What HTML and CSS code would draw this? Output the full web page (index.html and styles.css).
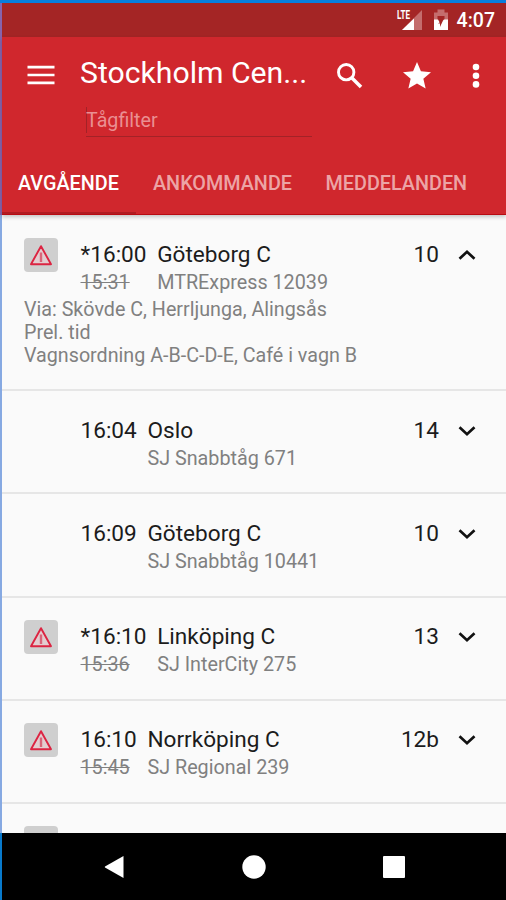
FILE: index.html
```html
<!DOCTYPE html>
<html lang="sv">
<head>
<meta charset="utf-8">
<title>Stockholm Central</title>
<link rel="stylesheet" href="styles.css">
</head>
<body>
<svg class="defs" width="0" height="0">
  <symbol id="warn" viewBox="0 0 34 34"><path d="M17 8.200 L27 26.200 H7 Z" fill="#e3cdd0" stroke="#dc2442" stroke-width="1.9" stroke-linejoin="round"/><path d="M17 14.500V24" stroke="#d9667a" stroke-width="2.400"/></symbol>
  <symbol id="down" viewBox="0 0 18 12"><path d="M1.500 2.300 L9 9.200 L16.500 2.300" fill="none" stroke="#111" stroke-width="2.700"/></symbol>
  <symbol id="up" viewBox="0 0 18 12"><path d="M1.500 9.700 L9 2.800 L16.500 9.700" fill="none" stroke="#111" stroke-width="2.700"/></symbol>
</svg>
<div class="screen">
  <div class="edge"><i class="edge-red"></i><i class="edge-light"></i><i class="edge-dark"></i></div>
  <div class="phone">
    <div class="status">
      <svg class="signal" width="28" height="24" viewBox="0 0 28 24"><path d="M26 2V22H6Z" fill="#c46d6d"/><path d="M18 10.500V22H6Z" fill="#fff"/><text class="lte" x="1" y="11" textLength="13" lengthAdjust="spacingAndGlyphs">LTE</text></svg>
      <svg class="battery" width="16" height="24" viewBox="0 0 16 24"><path d="M1 12V4.500H4.500V1.500H11.500V4.500H15V12H11.500V8H4.500V12Z" fill="#c46d6d"/><path d="M1 11.500H5L7 15L11 11.500H15V22H1Z" fill="#fff"/><path d="M10.500 11.500L7 19V15.500H5Z" fill="#a42525"/></svg>
      <span class="clock">4:07</span>
    </div>
    <header class="header">
      <div class="toolbar">
        <svg class="menu" width="28" height="22" viewBox="0 0 28 22"><path d="M.5 3.200H27.500M.5 11H27.500M.5 18.900H27.500" stroke="#fff" stroke-width="2.700"/></svg>
        <h1 class="title">Stockholm Cen...</h1>
        <svg class="search" width="27" height="27" viewBox="0 0 27 27"><circle cx="10.200" cy="10.200" r="7.700" fill="none" stroke="#fff" stroke-width="2.900"/><path d="M15.700 15.700L25 25" stroke="#fff" stroke-width="3.500"/></svg>
        <svg class="star" width="28" height="28" viewBox="2 2 20 20"><path d="M12 17.270L18.180 21l-1.640-7.030L22 9.240l-7.190-.61L12 2 9.190 8.630 2 9.240l5.460 4.730L5.820 21z" fill="#fff"/></svg>
        <svg class="more" width="8" height="26" viewBox="0 0 8 26"><g fill="#fff"><circle cx="4" cy="4" r="3.300"/><circle cx="4" cy="12.700" r="3.300"/><circle cx="4" cy="21.400" r="3.300"/></g></svg>
      </div>
      <div class="filter">Tågfilter</div>
      <nav class="tabs"><span class="tab active">AVGÅENDE</span><span class="tab arrivals">ANKOMMANDE</span><span class="tab messages">MEDDELANDEN</span></nav>
      <div class="indicator"></div>
    </header>
    <main class="list">
      <article class="row expanded">
        <svg class="warn"><use href="#warn"/></svg>
        <div class="times"><div class="main">*16:00</div><div class="sub"><s>15:31</s></div></div>
        <div class="train"><div class="main">Göteborg C</div><div class="sub">MTRExpress 12039</div></div>
        <div class="main platform">10</div><svg class="chev"><use href="#up"/></svg>
        <div class="details">Via: Skövde C, Herrljunga, Alingsås<br>Prel. tid<br>Vagnsordning A-B-C-D-E, Café i vagn B</div>
      </article>
      <article class="row">
        <div class="times"><div class="main">16:04</div></div>
        <div class="train"><div class="main">Oslo</div><div class="sub">SJ Snabbtåg 671</div></div>
        <div class="main platform">14</div><svg class="chev"><use href="#down"/></svg>
      </article>
      <article class="row third">
        <div class="times"><div class="main">16:09</div></div>
        <div class="train"><div class="main">Göteborg C</div><div class="sub">SJ Snabbtåg 10441</div></div>
        <div class="main platform">10</div><svg class="chev"><use href="#down"/></svg>
      </article>
      <article class="row late">
        <svg class="warn"><use href="#warn"/></svg>
        <div class="times"><div class="main">*16:10</div><div class="sub"><s>15:36</s></div></div>
        <div class="train"><div class="main">Linköping C</div><div class="sub">SJ InterCity 275</div></div>
        <div class="main platform">13</div><svg class="chev"><use href="#down"/></svg>
      </article>
      <article class="row late">
        <svg class="warn"><use href="#warn"/></svg>
        <div class="times"><div class="main">16:10</div><div class="sub"><s>15:45</s></div></div>
        <div class="train"><div class="main">Norrköping C</div><div class="sub">SJ Regional 239</div></div>
        <div class="main platform">12b</div><svg class="chev"><use href="#down"/></svg>
      </article>
      <article class="row late"><svg class="warn"><use href="#warn"/></svg></article>
    </main>
    <footer class="navbar">
      <svg width="20" height="24" viewBox="0 0 20 24"><path d="M19.500 1V23L1 12.500Q.5 12 1 11.500Z" fill="#fff"/></svg>
      <svg width="24" height="24" viewBox="0 0 24 24"><circle cx="12" cy="12" r="11.700" fill="#fff"/></svg>
      <svg width="22" height="22" viewBox="0 0 22 22"><rect width="22" height="22" rx="1" fill="#fff"/></svg>
    </footer>
  </div>
</div>
</body>
</html>
```
FILE: styles.css
```css
* { box-sizing: border-box; }
body { margin: 0; font-family: Roboto, "Liberation Sans", sans-serif; }
svg { display: block; flex: none; }
.defs { position: absolute; }
.screen { width: 506px; height: 900px; padding-top: 3px; display: flex; background: #087fdd; overflow: hidden; }
.edge { width: 2px; display: flex; flex-direction: column; }
.edge-red { height: 212px; background: #8763ac; }
.edge-light { height: 618px; background: #86a9e2; }
.edge-dark { flex: 1; background: #0879cb; }
.phone { width: 504px; height: 897px; display: flex; flex-direction: column; background: #fafafa; }
.status { height: 34px; flex: none; display: flex; justify-content: flex-end; background: #a42525; padding: 5px 11px 0 0; color: #fff; }
.signal { margin-right: 9px; }
.battery { margin-right: 8px; }
.lte { font: 700 13px Roboto, sans-serif; fill: #fff; }
.clock { font-size: 19.500px; font-weight: 500; line-height: 26px; }
.header { height: 178px; flex: none; background: #d0272d; color: #fff; border-bottom: 1px solid #b90b12; box-shadow: 0 2px 4px rgba(0,0,0,.22); display: flex; flex-direction: column; z-index: 1; }
.toolbar { height: 68px; display: flex; align-items: flex-start; padding-left: 25px; }
.menu { margin-top: 27px; }
.title { margin: 17px 0 0 25px; width: 256px; font-size: 30.200px; font-weight: 400; line-height: 38px; white-space: nowrap; }
.search { margin-top: 25px; }
.star { margin: 25px 0 0 40px; }
.more { margin: 26px 0 0 41px; }
.filter { margin: -1px 0 0 84px; width: 226px; height: 33px; border-bottom: 1px solid #a32227; color: #ea8f92; font-size: 19.700px; line-height: 34px; background: linear-gradient(#a32227, #a32227) 0 3px / 1px 26px no-repeat; }
.tabs { height: 75px; display: flex; padding: 30px 0 0 16px; font-size: 19.800px; line-height: 34px; font-weight: 500; color: #eca4a6; white-space: nowrap; }
.active { width: 135px; color: #fff; }
.arrivals { width: 172.500px; }
.indicator { width: 134px; height: 2px; margin-top: auto; background: #b01c22; }
.list { flex: 1; min-height: 0; overflow: hidden; }
.row { height: 103px; display: grid; grid-template-columns: 56.500px auto 1fr auto 18px; padding: 26px 30px 0 22px; border-bottom: 2px solid #e6e6e6; align-items: start; align-content: start; }
.expanded { height: 176px; }
.third { height: 104px; }
.late { padding-top: 25px; }
.warn { width: 34px; height: 34px; margin-top: -3px; border-radius: 4px; background: #cfcfcf; grid-column: 1; grid-row: 1; }
.times { grid-column: 2; grid-row: 1; padding-right: 10.700px; }
.train { grid-column: 3; grid-row: 1; }
.platform { grid-column: 4; margin-right: 19px; }
.chev { grid-column: 5; width: 18px; height: 12px; margin-top: 8px; }
.main { font-size: 22.600px; line-height: 28px; color: #1c1c1c; white-space: nowrap; }
.sub { font-size: 19.750px; line-height: 28px; color: #808080; white-space: nowrap; }
.details { grid-column: 1 / -1; font-size: 19.700px; line-height: 23px; color: #808080; white-space: nowrap; margin-top: 1px; }
.navbar { height: 67px; flex: none; background: #000; display: flex; align-items: center; justify-content: space-between; padding: 0 101px 0 102px; }
```
